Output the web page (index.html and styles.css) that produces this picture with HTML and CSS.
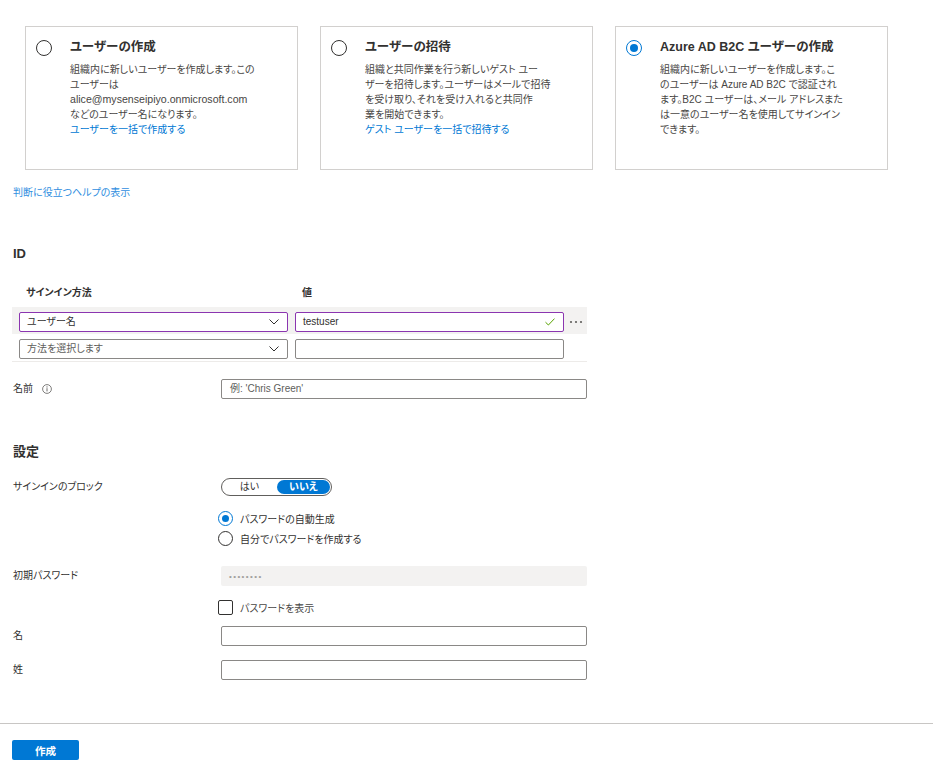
FILE: index.html
```html
<!DOCTYPE html>
<html lang="ja">
<head>
<meta charset="utf-8">
<title>新しいユーザー</title>
<link rel="stylesheet" href="styles.css">
</head>
<body>
<main class="page">
  <div class="cards">
    <div class="card">
      <span class="radio"></span>
      <div class="card-body">
        <div class="card-title">ユーザーの作成</div>
        <p class="card-desc">組織内に新しいユーザーを作成します。この<br>ユーザーは<br><span class="latin">alice@mysenseipiyo.onmicrosoft.com</span><br>などのユーザー名になります。<br><a class="link" href="#">ユーザーを一括で作成する</a></p>
      </div>
    </div>
    <div class="card">
      <span class="radio"></span>
      <div class="card-body">
        <div class="card-title">ユーザーの招待</div>
        <p class="card-desc">組織と共同作業を行う新しいゲスト ユー<br>ザーを招待します。ユーザーはメールで招待<br>を受け取り、それを受け入れると共同作<br>業を開始できます。<br><a class="link" href="#">ゲスト ユーザーを一括で招待する</a></p>
      </div>
    </div>
    <div class="card">
      <span class="radio checked"></span>
      <div class="card-body">
        <div class="card-title">Azure AD B2C ユーザーの作成</div>
        <p class="card-desc">組織内に新しいユーザーを作成します。こ<br>のユーザーは Azure AD B2C で認証され<br>ます。B2C ユーザーは、メール アドレスまた<br>は一意のユーザー名を使用してサインイン<br>できます。</p>
      </div>
    </div>
  </div>

  <a class="help" href="#">判断に役立つヘルプの表示</a>

  <h2 class="section-title id-title">ID</h2>

  <div class="id-head"><div>サインイン方法</div><div>値</div></div>
  <div class="id-rows">
    <div class="id-row active">
      <div class="select valid"><span>ユーザー名</span>
        <svg class="chev" width="10" height="6" viewBox="0 0 10 6"><polyline points="0.5,0.5 5,5 9.5,0.5" fill="none" stroke="#323130" stroke-width="1"/></svg>
      </div>
      <div class="textbox valid"><span>testuser</span>
        <svg width="10" height="8" viewBox="0 0 10 8"><polyline points="0.5,4.2 3.4,7 9.5,0.6" fill="none" stroke="#57a300" stroke-width="1"/></svg>
      </div>
      <div class="more">
        <svg width="14" height="4" viewBox="0 0 14 4"><circle cx="2" cy="2" r="1.1" fill="#605e5c"/><circle cx="7" cy="2" r="1.1" fill="#605e5c"/><circle cx="12" cy="2" r="1.1" fill="#605e5c"/></svg>
      </div>
    </div>
    <div class="id-row last">
      <div class="select"><span class="ph">方法を選択します</span>
        <svg class="chev" width="10" height="6" viewBox="0 0 10 6"><polyline points="0.5,0.5 5,5 9.5,0.5" fill="none" stroke="#323130" stroke-width="1"/></svg>
      </div>
      <div class="textbox"></div>
      <div class="more"></div>
    </div>
  </div>

  <div class="field name-field">
    <div class="label">名前
      <svg width="10" height="10" viewBox="0 0 10 10"><circle cx="5" cy="5" r="4.4" fill="none" stroke="#605e5c" stroke-width="0.8"/><line x1="5" y1="4.2" x2="5" y2="7.4" stroke="#605e5c" stroke-width="0.9"/><circle cx="5" cy="2.9" r="0.55" fill="#605e5c"/></svg>
    </div>
    <div class="textbox"><span class="ph">例: 'Chris Green'</span></div>
  </div>

  <h2 class="section-title settings-title">設定</h2>

  <div class="field block-field">
    <div class="label">サインインのブロック</div>
    <div class="toggle"><span>はい</span><span class="on">いいえ</span></div>
  </div>

  <div class="field choice-field">
    <div></div>
    <div class="choices">
      <label class="choice"><span class="radio sm checked"></span>パスワードの自動生成</label>
      <label class="choice"><span class="radio sm"></span>自分でパスワードを作成する</label>
    </div>
  </div>

  <div class="field pw-field">
    <div class="label">初期パスワード</div>
    <div class="pw">••••••••</div>
  </div>

  <div class="field check-field">
    <div></div>
    <label class="check-row"><span class="checkbox"></span><span class="check-label">パスワードを表示</span></label>
  </div>

  <div class="field given-field">
    <div class="label">名</div>
    <div class="textbox"></div>
  </div>

  <div class="field sur-field">
    <div class="label">姓</div>
    <div class="textbox"></div>
  </div>
</main>
<footer class="footer">
  <button class="primary" type="button">作成</button>
</footer>
</body>
</html>
```

FILE: styles.css
```css
* {
  box-sizing: border-box;
  margin: 0;
  padding: 0;
}

body {
  font-family: "Liberation Sans", "Noto Sans CJK JP", sans-serif;
  font-size: 10px;
  color: #323130;
  background: #fff;
  font-feature-settings: "palt";
}

.page {
  padding: 26px 12px 0;
}

/* option cards */
.cards {
  display: flex;
  gap: 22px;
  margin-left: 13px;
}

.card {
  width: 273px;
  height: 144px;
  border: 1px solid #d2d0ce;
  padding: 11px 10px;
  display: flex;
  gap: 18px;
}

.radio {
  flex: none;
  width: 16px;
  height: 16px;
  border: 1px solid #323130;
  border-radius: 50%;
  margin-top: 2px;
  position: relative;
}

.radio.checked {
  border-color: #0078d4;
}

.radio.checked::after {
  content: "";
  position: absolute;
  left: 3px;
  top: 3px;
  width: 8px;
  height: 8px;
  border-radius: 50%;
  background: #0078d4;
}

.card-title {
  font-size: 12.5px;
  font-weight: 700;
  line-height: 18px;
  white-space: nowrap;
}

.card-desc {
  margin-top: 6px;
  line-height: 15px;
  color: #484644;
  white-space: nowrap;
}

.latin {
  font-size: 10.6px;
}

.link {
  color: #0078d4;
  text-decoration: none;
}

.help {
  display: block;
  margin-top: 15px;
  line-height: 16px;
  color: #2f8ee0;
  text-decoration: none;
  padding-left: 1px;
}

.section-title {
  font-size: 13px;
  font-weight: 700;
  line-height: 18px;
  padding-left: 1px;
}

.id-title {
  margin-top: 44px;
}

.settings-title {
  margin-top: 44px;
}

/* identity table */
.id-head {
  display: grid;
  grid-template-columns: 276px 269px;
  padding-left: 7px;
  margin-top: 22px;
  line-height: 16px;
  font-weight: 700;
}

.id-head div {
  padding-left: 7px;
}

.id-rows {
  margin-top: 6px;
  width: 575px;
}

.id-row {
  display: grid;
  grid-template-columns: 276px 269px 23px;
  padding: 5px 0 2px 7px;
}

.id-row.active {
  background: #f3f2f1;
}

.id-row.last {
  border-bottom: 1px solid #edebe9;
}

.select,
.textbox {
  height: 20px;
  border: 1px solid #8a8886;
  border-radius: 2px;
  background: #fff;
  display: flex;
  align-items: center;
  justify-content: space-between;
  padding: 0 8px 0 7px;
  line-height: 18px;
  white-space: nowrap;
}

.select {
  margin-right: 7px;
}

.valid {
  border-color: #8b35b0;
}

.ph {
  color: #605e5c;
}

.more {
  display: flex;
  align-items: center;
  justify-content: center;
}

/* form fields */
.field {
  display: grid;
  grid-template-columns: 209px 366px;
  align-items: center;
}

.label {
  display: flex;
  align-items: center;
  gap: 9px;
  line-height: 16px;
  padding-left: 1px;
}

.name-field .textbox {
  padding-left: 8px;
}

.name-field {
  margin-top: 17px;
}

.block-field {
  margin-top: 17px;
}

.toggle {
  width: 111px;
  height: 18px;
  border: 1px solid #605e5c;
  border-radius: 9px;
  padding: 1px;
  display: flex;
  gap: 1px;
}

.toggle span {
  flex: 1;
  border-radius: 7px;
  display: flex;
  align-items: center;
  justify-content: center;
  line-height: 14px;
}

.toggle .on {
  background: #0078d4;
  color: #fff;
  font-weight: 700;
}

.choice-field {
  margin-top: 12px;
}

.choices {
  display: flex;
  flex-direction: column;
  margin-left: -3px;
}

.choice {
  display: flex;
  align-items: center;
  height: 20px;
  gap: 7px;
}

.radio.sm {
  width: 15px;
  height: 15px;
  margin-top: 0;
}

.radio.sm.checked::after {
  left: 3px;
  top: 3px;
  width: 7px;
  height: 7px;
}

.pw-field {
  margin-top: 18px;
}

.pw {
  height: 20px;
  background: #f3f2f1;
  border-radius: 2px;
  padding-left: 8px;
  display: flex;
  align-items: center;
  color: #a19f9d;
  font-size: 8px;
  letter-spacing: 1.4px;
}

.check-field {
  margin-top: 11px;
}

.check-row {
  display: flex;
  align-items: center;
  height: 20px;
  gap: 7px;
  margin-left: -3px;
}

.checkbox {
  width: 15px;
  height: 15px;
  border: 1px solid #323130;
  border-radius: 2px;
}

.check-label {
  color: #484644;
}

.given-field {
  margin-top: 9px;
}

.sur-field {
  margin-top: 14px;
}

/* footer */
.footer {
  margin-top: 43px;
  border-top: 1px solid #c8c6c4;
  padding: 16px 12px 0;
}

.primary {
  width: 67px;
  height: 20px;
  background: #0078d4;
  color: #fff;
  border: none;
  border-radius: 2px;
  font-family: inherit;
  font-size: 10.5px;
  font-weight: 700;
}
```
